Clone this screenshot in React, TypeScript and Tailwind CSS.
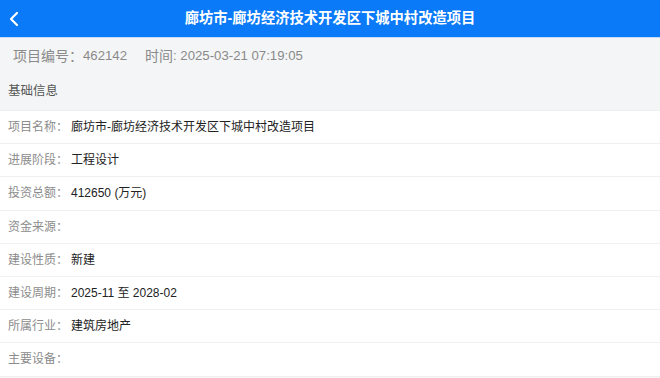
import React from "react";

const rows: [string, string][] = [
  ["项目名称：", "廊坊市-廊坊经济技术开发区下城中村改造项目"],
  ["进展阶段：", "工程设计"],
  ["投资总额：", "412650 (万元)"],
  ["资金来源：", ""],
  ["建设性质：", "新建"],
  ["建设周期：", "2025-11 至 2028-02"],
  ["所属行业：", "建筑房地产"],
  ["主要设备：", ""],
];

export default function App() {
  return (
    <div
      className="w-[660px] h-[378px] overflow-hidden bg-[#f4f5f6]"
      style={{ fontFamily: '"Liberation Sans", "Noto Sans CJK SC", sans-serif' }}
    >
      <div className="relative h-[38px] bg-[#0a7af8] border-b border-[#c4dcf7] flex items-center justify-center">
        <svg
          className="absolute left-[8px] top-[11px]"
          width="12"
          height="16"
          viewBox="0 0 12 16"
          fill="none"
        >
          <polyline
            points="9,2 3,8 9,14"
            stroke="white"
            strokeWidth="2.2"
            strokeLinecap="round"
            strokeLinejoin="round"
          />
        </svg>
        <span className="text-white font-bold text-[14.3px] leading-none">
          廊坊市-廊坊经济技术开发区下城中村改造项目
        </span>
      </div>
      <div className="h-[36px] flex items-center pl-[13px] text-[14px] text-[#8a8a8a]">
        <span>项目编号：</span>
        <span className="text-[13.2px]">462142</span>
        <span className="ml-[18px]">时间</span>
        <span className="text-[13.2px]">: 2025-03-21 07:19:05</span>
      </div>
      <div className="h-[36px] pb-[2px] flex items-center pl-[8px] text-[12.5px] text-[#555]">
        基础信息
      </div>
      <div className="bg-white border-t border-[#eeeeee]">
        {rows.map(([k, v]) => (
          <div
            key={k}
            className="h-[33.2px] flex items-center pl-[8px] border-b border-[#f0f0f0] text-[12px]"
          >
            <span className="w-[63px] text-[#8c8c8c] whitespace-nowrap">{k}</span>
            <span className="text-[#222]">{v}</span>
          </div>
        ))}
      </div>
    </div>
  );
}
